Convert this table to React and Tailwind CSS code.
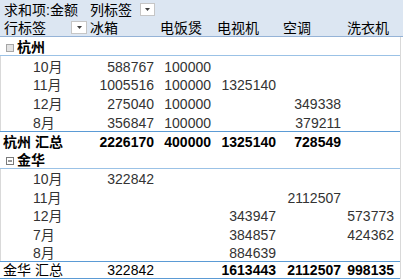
import React from "react";

const cols = [
  { w: "w-[69px]", pr: "pr-[3px]", pl: "pl-[2px]" },
  { w: "w-[57px]", pr: "pr-[3px]", pl: "pl-[3px]" },
  { w: "w-[66px]", pr: "pr-[4px]", pl: "pl-[3px]" },
  { w: "w-[64px]", pr: "pr-[3px]", pl: "pl-[3px]" },
  { w: "w-[56px]", pr: "pr-[6px]", pl: "pl-[3px]" },
];

function Btn({ w }) {
  return (
    <div
      className={`${w} h-[13px] self-center border border-[#c6c6c6] bg-white flex items-center justify-center`}
    >
      <svg width="5" height="3" viewBox="0 0 5 3">
        <path d="M0 0h5L2.5 3z" fill="#404040" />
      </svg>
    </div>
  );
}

function Values({ vals, boldIdx }) {
  return cols.map((c, i) => (
    <div
      key={i}
      className={`${c.w} ${c.pr} flex items-end justify-end whitespace-nowrap ${
        boldIdx && boldIdx.includes(i) ? "font-bold text-black" : ""
      }`}
    >
      {vals[i]}
    </div>
  ));
}

function Filler() {
  return <div className="w-[3px] border-l border-[#d9d9d9]" />;
}

function MonthRow({ h, label, vals }) {
  return (
    <div className={`flex ${h}`}>
      <div className="w-[400px] flex text-[#333333]">
        <div className="w-[88px] border-l border-[#d9d9d9] pl-[32px] flex items-end whitespace-nowrap">
          {label}
        </div>
        <Values vals={vals} />
      </div>
      <Filler />
    </div>
  );
}

function GroupRow({ label, minus }) {
  return (
    <div className="flex h-[19px]">
      <div className="w-[400px] flex border-b border-[#9bc2e6]">
        <div className="w-[88px] flex items-end font-bold text-black whitespace-nowrap">
          <div className="w-[17px] h-[16px] flex items-center pl-[6px]">
            <svg width="8" height="8" viewBox="0 0 8 8" className="mt-[1px]">
              {minus ? (
                <>
                  <rect x="0.5" y="0.5" width="7" height="7" fill="#ffffff" stroke="#7a7a7a" />
                  <path d="M2 4h4" stroke="#333333" strokeWidth="1" />
                </>
              ) : (
                <rect x="0.5" y="0.5" width="7" height="7" fill="#e3e3e3" stroke="#a6a6a6" />
              )}
            </svg>
          </div>
          {label}
        </div>
      </div>
      <Filler />
    </div>
  );
}

function TotalRow({ h, label, vals, labelBold, boldIdx, bottom }) {
  return (
    <div className={`flex ${h}`}>
      <div
        className={`w-[400px] flex border-t border-[#5b9bd5] ${
          bottom ? "border-b" : ""
        } text-black`}
      >
        <div
          className={`w-[88px] pl-[3px] flex items-end whitespace-nowrap ${
            labelBold ? "font-bold" : ""
          }`}
        >
          {label}
        </div>
        <Values vals={vals} boldIdx={boldIdx} />
      </div>
      <Filler />
    </div>
  );
}

export default function App() {
  const hz = [
    ["h-[19px]", "10月", ["588767", "100000", "", "", ""]],
    ["h-[18px]", "11月", ["1005516", "100000", "1325140", "", ""]],
    ["h-[19px]", "12月", ["275040", "100000", "", "349338", ""]],
    ["h-[19px]", "8月", ["356847", "100000", "", "379211", ""]],
  ];
  const jh = [
    ["h-[18px]", "10月", ["322842", "", "", "", ""]],
    ["h-[19px]", "11月", ["", "", "", "2112507", ""]],
    ["h-[18px]", "12月", ["", "", "343947", "", "573773"]],
    ["h-[19px]", "7月", ["", "", "384857", "", "424362"]],
    ["h-[18px]", "8月", ["", "", "884639", "", ""]],
  ];
  return (
    <div className="w-[403px] h-[280px] bg-white overflow-hidden font-[family-name:'Liberation_Sans','Noto_Sans_CJK_SC',sans-serif] text-[14px] leading-[16px] text-black">
      {/* header row 1 */}
      <div className="flex h-[19px] bg-[#dce6f2] pb-[1px]">
        <div className="w-[88px] pl-[4px] flex items-end whitespace-nowrap">求和项:金额</div>
        <div className="w-[69px] pl-[2px] pr-[2px] flex items-end justify-between whitespace-nowrap">
          <span>列标签</span>
          <Btn w="w-[15px]" />
        </div>
      </div>
      {/* header row 2 */}
      <div className="flex h-[18px] bg-[#dce6f2] border-b border-[#95b3d7]">
        <div className="w-[88px] pl-[4px] pr-[1px] flex items-end justify-between whitespace-nowrap">
          <span>行标签</span>
          <Btn w="w-[16px]" />
        </div>
        {["冰箱", "电饭煲", "电视机", "空调", "洗衣机"].map((t, i) => (
          <div key={i} className={`${cols[i].w} ${cols[i].pl} flex items-end whitespace-nowrap`}>
            {t}
          </div>
        ))}
      </div>

      <GroupRow label="杭州" />
      {hz.map(([h, l, v]) => (
        <MonthRow key={l} h={h} label={l} vals={v} />
      ))}
      <TotalRow
        h="h-[19px]"
        label="杭州 汇总"
        labelBold
        vals={["2226170", "400000", "1325140", "728549", ""]}
        boldIdx={[0, 1, 2, 3, 4]}
      />
      <GroupRow label="金华" minus />
      {jh.map(([h, l, v]) => (
        <MonthRow key={l} h={h} label={l} vals={v} />
      ))}
      <TotalRow
        h="h-[18px]"
        label="金华 汇总"
        vals={["322842", "", "1613443", "2112507", "998135"]}
        boldIdx={[2, 3, 4]}
        bottom
      />
    </div>
  );
}
